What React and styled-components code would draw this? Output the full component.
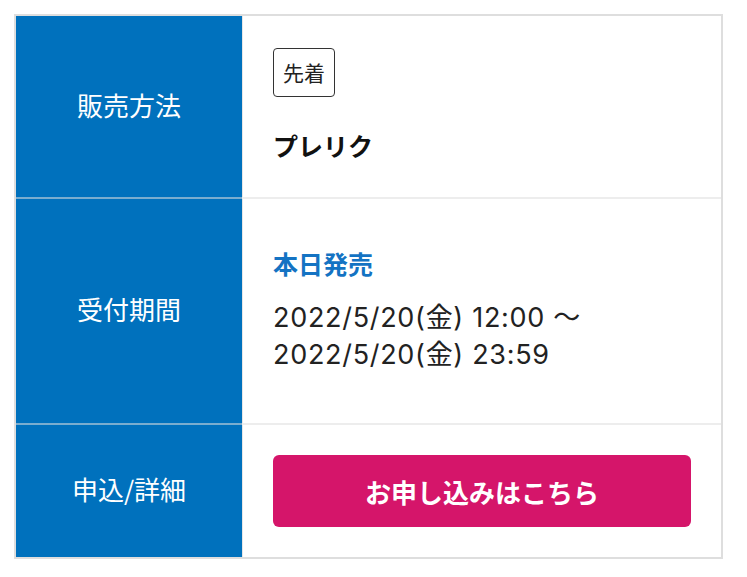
import React from "react";
import styled, { createGlobalStyle } from "styled-components";

const Global = createGlobalStyle`
  html, body { margin: 0; padding: 0; background: #fff; }
  body { font-family: "Noto Sans CJK JP", "Noto Sans", sans-serif; color: #222; }
`;

const Page = styled.div`
  padding: 14px 0 0 14px;
`;

const Table = styled.div`
  width: 705px;
  border: 2px solid #dedede;
  display: flex;
  flex-direction: column;
`;

const Row = styled.div`
  display: grid;
  grid-template-columns: 226px 1fr;
  height: ${(p) => p.$h}px;
  box-sizing: border-box;
  border-top: ${(p) => (p.$first ? "none" : "2px solid rgba(222,222,222,0.55)")};
  background: linear-gradient(to right, #0071bd 226px, #fff 226px);
`;

const Label = styled.div`
  display: flex;
  align-items: center;
  justify-content: center;
  color: #fff;
  font-size: 26px;
  padding-bottom: 5px;
`;

const Content = styled.div`
  display: flex;
  flex-direction: column;
  justify-content: center;
  align-items: flex-start;
  padding: 0 30px ${(p) => p.$pb || 0}px;
  gap: ${(p) => p.$gap || 0}px;
  border-left: 1px solid #e6e6e6;
`;

const Tag = styled.span`
  display: inline-block;
  border: 1.5px solid #333;
  border-radius: 4px;
  padding: 9px 9px;
  font-size: 21px;
  line-height: 29px;
  color: #222;
`;

const Strong = styled.div`
  font-size: 25px;
  font-weight: 700;
  line-height: 37px;
  color: ${(p) => p.$color || "#111"};
`;

const DateText = styled.div`
  font-family: Inter, "Noto Sans CJK JP", sans-serif;
  font-size: 27px;
  line-height: 37px;
  letter-spacing: 0.7px;
  color: #222;
`;

const Button = styled.a`
  display: flex;
  align-items: center;
  justify-content: center;
  width: 100%;
  height: 72px;
  background: #d5156a;
  border-radius: 6px;
  color: #fff;
  font-size: 26px;
  font-weight: 700;
  text-decoration: none;
`;

export default function App() {
  return (
    <>
      <Global />
      <Page>
        <Table>
          <Row $first $h={181}>
            <Label>販売方法</Label>
            <Content $gap={30} $pb={2}>
              <Tag>先着</Tag>
              <Strong>プレリク</Strong>
            </Content>
          </Row>
          <Row $h={226}>
            <Label>受付期間</Label>
            <Content $gap={17} $pb={4}>
              <Strong $color="#1473c3">本日発売</Strong>
              <DateText>
                2022/5/20(金) 12:00 〜
                <br />
                2022/5/20(金) 23:59
              </DateText>
            </Content>
          </Row>
          <Row $h={134}>
            <Label>申込/詳細</Label>
            <Content>
              <Button href="#">お申し込みはこちら</Button>
            </Content>
          </Row>
        </Table>
      </Page>
    </>
  );
}
